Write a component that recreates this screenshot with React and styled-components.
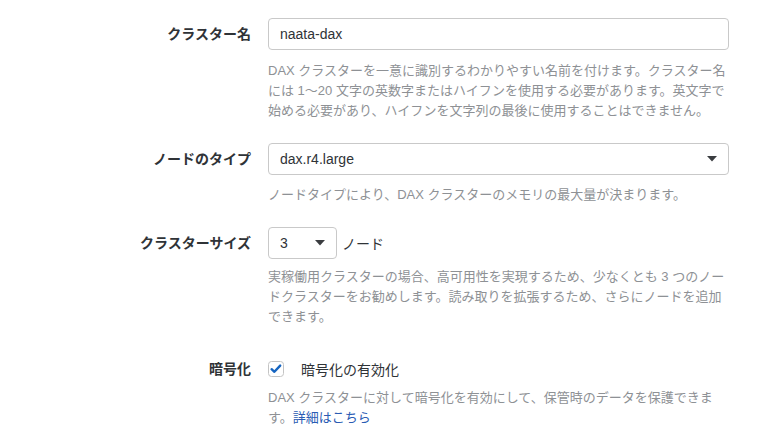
import React from "react";
import styled, { createGlobalStyle } from "styled-components";

const Global = createGlobalStyle`
  html, body { margin: 0; padding: 0; background: #ffffff; }
  body {
    font-family: "Liberation Sans", "Noto Sans CJK JP", sans-serif;
    color: #333333;
  }
`;

const Page = styled.div`
  width: 769px;
  height: 435px;
  box-sizing: border-box;
  padding-top: 18px;
  overflow: hidden;
  display: flex;
  flex-direction: column;
`;

const Field = styled.div`
  display: grid;
  grid-template-columns: 251px 461px;
  column-gap: 17px;
  margin-top: ${(p) => p.$mt || 0}px;
`;

const Label = styled.div`
  grid-column: 1;
  grid-row: 1;
  align-self: center;
  text-align: right;
  font-size: 14px;
  font-weight: 700;
  color: #2f3337;
  line-height: 20px;
`;

const Control = styled.div`
  grid-column: 2;
  grid-row: 1;
  display: flex;
  align-items: center;
  min-height: ${(p) => p.$h || 32}px;
`;

const Help = styled.div`
  grid-column: 2;
  grid-row: 2;
  margin-top: ${(p) => p.$mt || 10}px;
  font-size: 13px;
  line-height: 20px;
  color: #8e9195;
  white-space: nowrap;
`;

const TextBox = styled.div`
  flex: 1;
  height: 32px;
  box-sizing: border-box;
  border: 1px solid #c9c9c9;
  border-radius: 4px;
  padding: 0 11px;
  display: flex;
  align-items: center;
  font-size: 14px;
  color: #2f3337;
`;

const SelectBox = styled.div`
  ${(p) => (p.$w ? `width: ${p.$w}px;` : "flex: 1;")}
  height: 32px;
  box-sizing: border-box;
  border: 1px solid #c9c9c9;
  border-radius: 4px;
  padding: 0 11px 0 11px;
  display: flex;
  align-items: center;
  justify-content: space-between;
  font-size: 14px;
  color: #2f3337;
`;

const Suffix = styled.span`
  margin-left: 5px;
  font-size: 14px;
  color: #2f3337;
`;

const CheckLabel = styled.span`
  margin-left: 17px;
  font-size: 14px;
  color: #2f3337;
`;

const Link = styled.a`
  color: #2a5bb3;
  text-decoration: none;
`;

const Caret = () => (
  <svg width="10" height="6" viewBox="0 0 10 6">
    <polygon points="0,0 10,0 5,5.5" fill="#3a3d40" />
  </svg>
);

const CheckBox = () => (
  <svg width="16" height="16" viewBox="0 0 16 16">
    <rect x="0.5" y="0.5" width="15" height="15" rx="3" fill="#fff" stroke="#c4c4c4" />
    <path d="M3.6 8.2 L6.4 10.8 L12.2 4.6" fill="none" stroke="#1665c1" strokeWidth="2.4" strokeLinecap="round" strokeLinejoin="round" />
  </svg>
);

export default function App() {
  return (
    <Page>
      <Global />
      <Field>
        <Label>クラスター名</Label>
        <Control>
          <TextBox>naata-dax</TextBox>
        </Control>
        <Help $mt={11}>
          DAX クラスターを一意に識別するわかりやすい名前を付けます。クラスター名
          <br />
          には 1〜20 文字の英数字またはハイフンを使用する必要があります。英文字で
          <br />
          始める必要があり、ハイフンを文字列の最後に使用することはできません。
        </Help>
      </Field>

      <Field $mt={22}>
        <Label>ノードのタイプ</Label>
        <Control>
          <SelectBox>
            <span>dax.r4.large</span>
            <Caret />
          </SelectBox>
        </Control>
        <Help $mt={10}>ノードタイプにより、DAX クラスターのメモリの最大量が決まります。</Help>
      </Field>

      <Field $mt={22}>
        <Label>クラスターサイズ</Label>
        <Control>
          <SelectBox $w={69}>
            <span>3</span>
            <Caret />
          </SelectBox>
          <Suffix>ノード</Suffix>
        </Control>
        <Help $mt={8}>
          実稼働用クラスターの場合、高可用性を実現するため、少なくとも 3 つのノー
          <br />
          ドクラスターをお勧めします。読み取りを拡張するため、さらにノードを追加
          <br />
          できます。
        </Help>
      </Field>

      <Field $mt={32}>
        <Label>暗号化</Label>
        <Control $h={20}>
          <CheckBox />
          <CheckLabel>暗号化の有効化</CheckLabel>
        </Control>
        <Help $mt={9}>
          DAX クラスターに対して暗号化を有効にして、保管時のデータを保護できま
          <br />
          す。<Link href="#">詳細はこちら</Link>
        </Help>
      </Field>
    </Page>
  );
}
